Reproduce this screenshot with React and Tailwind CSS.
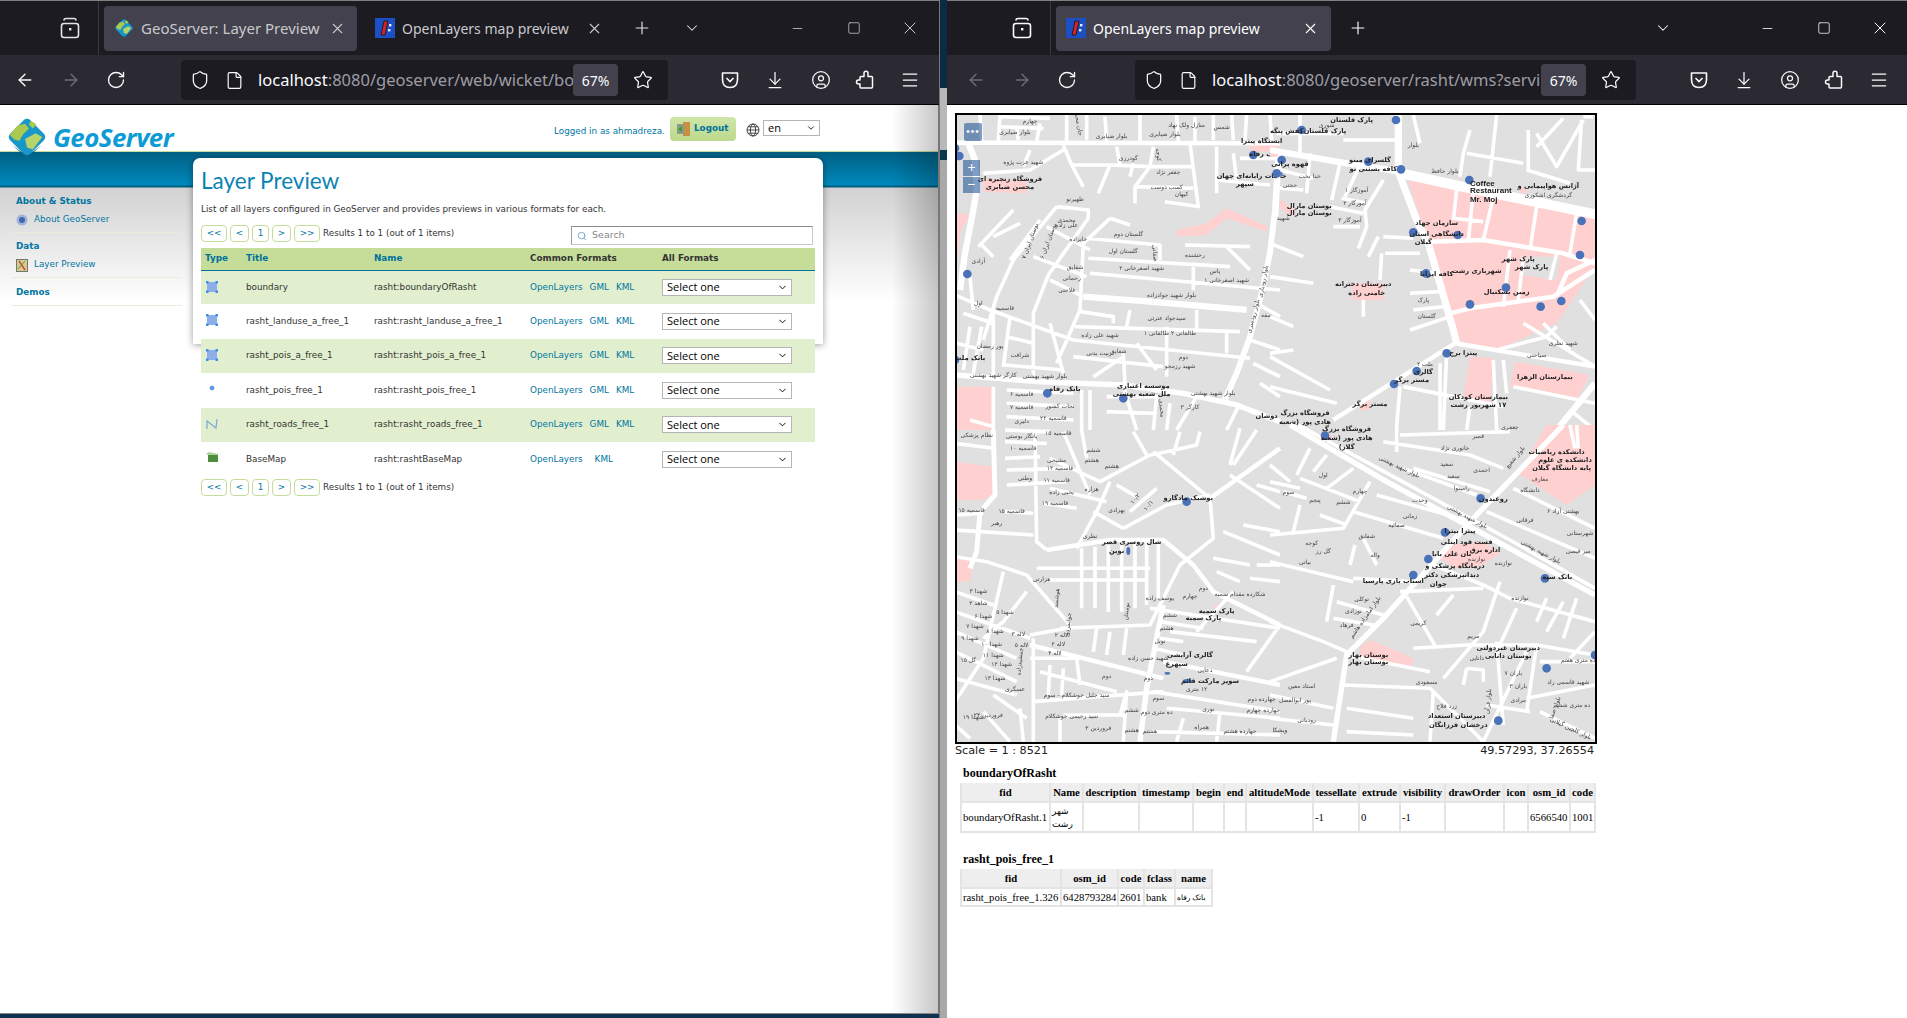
import { ArrowLeft, ArrowRight, RotateCw, Shield, File, Star, ArrowDownToLine, CircleUser, Menu, X, Plus, ChevronDown, Minus, Square, Search } from 'lucide-react';

// chrome icons ---------------------------------------------------------------
function GlobeLogo({ size = 44 }) {
  return (
    <svg width={size} height={size} viewBox="0 0 44 44">
      <rect x="7" y="7" width="30" height="30" rx="5" transform="rotate(45 22 22)" fill="#1a97c9" />
      <path d="M4 20 L12 10 L20 8 L24 13 L18 19 L14 26 L9 25 Z" fill="#a9c94f" />
      <path d="M20 24 L31 18 L38 22 L28 35 L22 33 Z" fill="#b9d36b" />
      <path d="M26 5 L32 9 L28 13 L24 9 Z" fill="#a9c94f" />
      <path d="M6 30 L22 42 L38 30 L22 44 Z" fill="#0c6b92" />
    </svg>
  );
}

function OlFavicon() {
  return (
    <svg width="20" height="20" viewBox="0 0 20 20" className="shrink-0">
      <rect width="20" height="20" fill="#1d4fc4" />
      <path d="M9 3 L13 3 L10 17 L6 17 Z" fill="#d32323" stroke="#111" strokeWidth="0.8" />
      <rect x="14" y="6" width="2.4" height="2.4" fill="#eee" />
      <rect x="13" y="11" width="2.4" height="2.4" fill="#eee" />
    </svg>
  );
}

function TabsIcon() {
  return (
    <svg width="22" height="22" viewBox="0 0 22 22" fill="none" stroke="currentColor" strokeWidth="1.6">
      <rect x="2.5" y="6.5" width="17" height="14" rx="2.5" />
      <path d="M5 3.5 Q5 1.5 7 1.5 L15 1.5 Q17 1.5 17 3.5" />
      <rect x="10" y="11" width="2.4" height="2.4" fill="currentColor" stroke="none" />
    </svg>
  );
}

function PocketIcon() {
  return (
    <svg width="20" height="20" viewBox="0 0 20 20" fill="none" stroke="currentColor" strokeWidth="1.6">
      <path d="M2.5 3 H17.5 V9.5 Q17.5 17.5 10 17.5 Q2.5 17.5 2.5 9.5 Z" strokeLinejoin="round" />
      <path d="M6.5 8 L10 11.5 L13.5 8" />
    </svg>
  );
}

function ExtensionIcon() {
  return (
    <svg width="20" height="20" viewBox="0 0 20 20" fill="none" stroke="currentColor" strokeWidth="1.5" strokeLinejoin="round" className="ml-[24px]">
      <path d="M9 3.2 A2 2 0 0 1 13 3.2 V6.5 H16.5 Q17.5 6.5 17.5 7.5 V17 Q17.5 18 16.5 18 H6 Q5 18 5 17 V14 H3.5 A2 2 0 0 1 3.5 10 H5 V7.5 Q5 6.5 6 6.5 H9 Z" />
    </svg>
  );
}

function BrowserTab({ active, bright, icon, title, width, gapEnd, small }) {
  return (
    <div className={`flex items-center h-[45px] pl-[10px] rounded-[4px] ${active ? 'bg-[#42414d]' : ''} ${bright ? 'text-white' : 'text-[#c9c9cc]'}`} style={{ width }}>
      {icon}
      <span className={`ml-[7px] whitespace-nowrap ${small ? 'text-[14px]' : 'text-[15px]'}`}>{title}</span>
      <X size={17} strokeWidth={1.5} className="ml-auto" style={{ marginRight: gapEnd }} />
    </div>
  );
}

function WindowButtons({ dim, endGap }) {
  return (
    <div className={`flex items-center ml-auto ${dim}`}>
      <Minus size={15} strokeWidth={1.3} className="mr-[42px]" />
      <Square size={14} strokeWidth={1.3} className="mr-[39px]" />
      <X size={20} strokeWidth={1.2} style={{ marginRight: endGap }} />
    </div>
  );
}

function Toolbar({ backDim, host, path, urlWidth, urlLeft, afterUrl, start }) {
  return (
    <div className="h-[50px] pt-[1px] bg-[#2b2a33] flex items-center text-[#fbfbfe] border-b border-black">
      <ArrowLeft size={20} strokeWidth={1.6} className={backDim ? 'text-[#6f6e75]' : ''} style={{ marginLeft: start }} />
      <ArrowRight size={20} strokeWidth={1.6} className="ml-[26px] text-[#6f6e75]" />
      <RotateCw size={20} strokeWidth={1.6} className="ml-[25px]" />
      <div className="h-[40px] bg-[#1c1b22] rounded-[4px] flex items-center" style={{ width: urlWidth, marginLeft: urlLeft }}>
        <Shield size={20} strokeWidth={1.5} className="ml-[9px] shrink-0" />
        <File size={19} strokeWidth={1.5} className="ml-[15px] shrink-0" />
        <div className="ml-[14px] flex-1 overflow-hidden whitespace-nowrap text-[16.5px] text-[#9d9da3]">
          <span className="text-[#fbfbfe]">{host}</span>{path}
        </div>
        <div className="w-[45px] h-[32px] rounded-[4px] bg-[#42414d] flex items-center justify-center text-[14px] shrink-0">67%</div>
        <Star size={20} strokeWidth={1.5} className="mx-[15px] shrink-0" />
      </div>
      <div className="flex items-center" style={{ marginLeft: afterUrl }}>
        <PocketIcon />
        <ArrowDownToLine size={20} strokeWidth={1.5} className="ml-[25px]" />
        <CircleUser size={20} strokeWidth={1.5} className="ml-[26px]" />
        <ExtensionIcon />
        <Menu size={20} strokeWidth={1.5} className="ml-[25px]" />
      </div>
    </div>
  );
}

// geoserver page -------------------------------------------------------------
function PagerBtn({ w, label }) {
  return (
    <span className="h-[17px] border border-[#c5dd9b] rounded-[4px] flex items-center justify-center text-[#0076a1]" style={{ width: w }}>
      {label}
    </span>
  );
}

function Pager() {
  return (
    <div className="flex items-center gap-[3px]">
      <PagerBtn w={26} label="<<" />
      <PagerBtn w={19} label="<" />
      <PagerBtn w={17} label="1" />
      <PagerBtn w={19} label=">" />
      <PagerBtn w={26} label=">>" />
      <span className="text-[#333]">Results 1 to 1 (out of 1 items)</span>
    </div>
  );
}

function TypeIcon({ kind }) {
  if (kind === 'point') {
    return (
      <svg width="12" height="12" viewBox="0 0 12 12"><circle cx="6" cy="5" r="2" fill="#5aa0ee" stroke="#2f76c9" strokeWidth="0.6" /></svg>
    );
  }
  if (kind === 'line') {
    return (
      <svg width="12" height="12" viewBox="0 0 12 12" fill="none" stroke="#7ba7dc" strokeWidth="1.2"><path d="M1 11 L1 3 L10 10 L11 1" /></svg>
    );
  }
  if (kind === 'raster') {
    return (
      <svg width="13" height="12" viewBox="0 0 13 12">
        <rect x="2" y="3" width="10" height="7" fill="#4d8f3f" />
        <path d="M0 2 L3 0 L12 2 L12 3 L2 3 Z" fill="#a8d39b" />
      </svg>
    );
  }
  return (
    <svg width="12" height="12" viewBox="0 0 12 12">
      <rect x="1" y="1" width="10" height="10" fill="#8eaeea" />
      <rect width="2.5" height="2.5" fill="#3d8ee8" />
      <rect x="9.5" width="2.5" height="2.5" fill="#3d8ee8" />
      <rect y="9.5" width="2.5" height="2.5" fill="#3d8ee8" />
      <rect x="9.5" y="9.5" width="2.5" height="2.5" fill="#3d8ee8" />
    </svg>
  );
}

const layers = [
  { kind: 'poly', title: 'boundary', name: 'rasht:boundaryOfRasht' },
  { kind: 'poly', title: 'rasht_landuse_a_free_1', name: 'rasht:rasht_landuse_a_free_1' },
  { kind: 'poly', title: 'rasht_pois_a_free_1', name: 'rasht:rasht_pois_a_free_1' },
  { kind: 'point', title: 'rasht_pois_free_1', name: 'rasht:rasht_pois_free_1' },
  { kind: 'line', title: 'rasht_roads_free_1', name: 'rasht:rasht_roads_free_1' },
  { kind: 'raster', title: 'BaseMap', name: 'rasht:rashtBaseMap', raster: true },
];

function LayerTable() {
  return (
    <table className="w-[614px] table-fixed border-collapse mt-[3px]">
      <colgroup>
        <col className="w-[45px]" />
        <col className="w-[128px]" />
        <col className="w-[156px]" />
        <col className="w-[132px]" />
        <col />
      </colgroup>
      <thead>
        <tr className="h-[22px] bg-[#c6dd9a] border-b-[1px] border-[#00729c] text-left font-bold">
          <th className="pl-[4px] text-[#00729c]">Type</th>
          <th className="text-[#00729c]">Title</th>
          <th className="text-[#00729c]">Name</th>
          <th className="text-[#333]">Common Formats</th>
          <th className="text-[#333]">All Formats</th>
        </tr>
      </thead>
      <tbody>
        {layers.map((l, i) => (
          <tr key={l.name} className={`h-[34.4px] ${i % 2 === 0 ? 'bg-[#e1efce]' : ''}`}>
            <td className="pl-[5px] align-top pt-[10px]"><TypeIcon kind={l.kind} /></td>
            <td className="text-[#333]">{l.title}</td>
            <td className="text-[#333]">{l.name}</td>
            <td className="text-[#0076a1]">
              <span>OpenLayers</span>
              {l.raster ? <span className="ml-[12px]">KML</span> : <><span className="ml-[7px]">GML</span><span className="ml-[7px]">KML</span></>}
            </td>
            <td>
              <div className="w-[130px] h-[17px] bg-white border border-[#b5b5b5] flex items-center pl-[4px] pr-[3px] text-[11px] text-black font-['Open_Sans',sans-serif]">
                Select one
                <ChevronDown size={11} strokeWidth={2} className="ml-auto" />
              </div>
            </td>
          </tr>
        ))}
      </tbody>
    </table>
  );
}

function SideLink({ icon, label }) {
  return (
    <div className="flex items-center h-[14px] mt-[7px] text-[#0076a1] pl-[4px]">
      {icon}
      <span className="ml-[6px]">{label}</span>
    </div>
  );
}

function GeoServerPage() {
  return (
    <div className="relative flex-1 bg-white border-r border-[#777] overflow-hidden font-['DejaVu_Sans',sans-serif] text-[8.8px]">
      <div className="h-[46px] flex items-start border-b border-[#c6dd9a] box-content">
        <div className="ml-[6px] mt-[11px] z-10"><GlobeLogo size={42} /></div>
        <span className="ml-[5px] mt-[14px] w-[122px] text-[25.8px] leading-[36px] font-bold italic text-[#0d9bd4] font-['Open_Sans',sans-serif] tracking-[-0.5px]">GeoServer</span>
        <span className="ml-[379px] mt-[20px] w-[112px] whitespace-nowrap text-[#0076a1]">Logged in as ahmadreza.</span>
        <div className="ml-[4px] mt-[12px] w-[66px] h-[24px] rounded-[4px] bg-gradient-to-b from-[#cfe5a8] to-[#bcd98d] flex items-center pl-[7px] font-bold text-[#00729c]">
          <svg width="13" height="14" viewBox="0 0 13 14" className="mr-[4px]">
            <rect x="6" y="0" width="7" height="14" fill="#c98f45" />
            <rect x="0" y="2" width="7" height="10" fill="#8a9a86" />
            <path d="M1 7 L5 4 L5 10 Z" fill="#3d9a35" />
          </svg>
          Logout
        </div>
        <svg width="14" height="14" viewBox="0 0 14 14" fill="none" stroke="#333" strokeWidth="0.9" className="ml-[10px] mt-[18px]">
          <circle cx="7" cy="7" r="6" />
          <ellipse cx="7" cy="7" rx="2.6" ry="6" />
          <path d="M1 7 H13 M2 3.8 H12 M2 10.2 H12" />
        </svg>
        <div className="ml-[3px] mt-[15px] w-[57px] h-[16px] border border-[#b5b5b5] flex items-center pl-[4px] pr-[3px] text-[11px] text-black font-['Open_Sans',sans-serif]">
          en
          <ChevronDown size={10} strokeWidth={2} className="ml-auto" />
        </div>
      </div>

      <div className="flex bg-[linear-gradient(to_bottom,#005f83_0px,#0089bc_33px,#005f83_34px,#005f83_35px,#d2d2d2_36px,#ffffff_150px)]">
        <div className="w-[193px] shrink-0 pt-[44px] pl-[12px] pr-[11px]">
          <div className="pl-[4px] font-bold text-[#0076a1] leading-[10px] mb-[1px]">About &amp; Status</div>
          <SideLink
            label="About GeoServer"
            icon={
              <svg width="12" height="12" viewBox="0 0 12 12"><circle cx="6" cy="6" r="5.5" fill="#9fb4d8" /><circle cx="6" cy="6" r="3" fill="#3f67b0" /></svg>
            }
          />
          <div className="border-b border-[#e6eeda] mt-[5px] mb-[8px]" />
          <div className="pl-[4px] font-bold text-[#0076a1] leading-[10px]">Data</div>
          <SideLink
            label="Layer Preview"
            icon={
              <svg width="12" height="13" viewBox="0 0 12 13"><rect x="0.5" y="0.5" width="11" height="12" fill="#d8c98e" stroke="#6d7a6d" /><path d="M3 2 L9 11" stroke="#c94a2d" strokeWidth="1.4" /><path d="M9 2 L2 10" stroke="#5e9b46" /></svg>
            }
          />
          <div className="border-b border-[#e6eeda] mt-[5px] mb-[9px]" />
          <div className="pl-[4px] font-bold text-[#0076a1] leading-[10px]">Demos</div>
          <div className="border-b border-[#e6eeda] mt-[8px]" />
        </div>

        {/* shadow stops partway down, the rows run on past it */}
        <div className="w-[630px] h-[186px] mt-[6px] bg-white rounded-t-[7px] shadow-[0_1px_7px_rgba(0,0,0,0.4)] pl-[8px]">
          <h1 className="pt-[7px] text-[22.5px] leading-[32px] text-[#0a83b4] font-['Lato',sans-serif]">Layer Preview</h1>
          <p className="mt-[6px] leading-[12px] whitespace-nowrap text-[#333]">List of all layers configured in GeoServer and provides previews in various formats for each.</p>
          <div className="flex items-start mt-[10px] w-[612px] justify-between">
            <Pager />
            <div className="w-[242px] h-[19px] mt-[1px] border border-[#c9c9c9] border-t-[#8c8c8c] border-l-[#9c9c9c] flex items-center pl-[5px] text-[#888] text-[9.5px]">
              <Search size={10} className="text-[#6a97c9] mr-[5px]" />
              Search
            </div>
          </div>
          <LayerTable />
          <div className="mt-[3px]"><Pager /></div>
        </div>
      </div>

      <div className="absolute right-0 top-0 bottom-0 w-[46px] bg-gradient-to-r from-transparent to-[rgba(0,0,0,0.22)] pointer-events-none" />
    </div>
  );
}

// map ------------------------------------------------------------------------
// each quarter is traced in its own 3x coordinates, then scaled down
const quarters = [
  {
    tx: -5, ty: -3,
    pink: [
      'M15,830 L125,830 L125,960 L15,960 Z', 'M100,205 L230,212 L230,250 L100,245 Z',
      'M15,310 L60,312 L35,360 L15,360 Z', 'M15,360 L32,360 L20,470 L15,470 Z',
      'M680,360 L770,340 L830,295 L955,350 L950,365 L830,325 L770,375 L680,380 Z', 'M900,100 L985,100 L985,125 L900,125 Z',
    ],
    roads: [
      [10, 'M15,98 L990,100 M230,812 L15,795'],
      [14, 'M55,100 L75,150 L80,240 L70,300 L45,430 L30,540'],
      [13, 'M985,130 L975,300 L960,430 L935,550 L900,680 L860,790 L820,880'],
      [12, 'M15,795 L260,815 L520,825 L700,850 L860,885 L990,935'],
      [14, 'M400,560 L600,575 L890,600'],
      [8, `M150,15 L145,95 M90,15 L95,95 M200,50 L205,90 M350,15 L350,100 M410,15 L410,90 M465,20 L470,95 M570,15 L570,95 M680,15 L685,95 M735,20 L735,95 M790,15 L790,90 M845,15 L850,90 M890,15 L885,90 M960,15 L965,90
        M150,20 L300,25 M150,50 L280,55 M340,105 L365,165 L400,230 M365,165 L480,165 L600,170 L730,170 M480,165 L445,250 M500,110 L510,165 M550,160 L540,200
        M610,110 L600,170 L555,230 L555,280 M555,230 L730,235 M645,275 L750,290 M720,100 L745,290 M800,110 L800,250 M800,210 L960,225 M850,130 L860,210 M870,145 L985,145
        M340,120 L240,180 L100,190 M320,290 L415,300 L415,325 L295,495 L250,610 M320,290 L190,450 L140,560 L100,690 M480,325 L400,400 L390,600 L320,760 M480,325 L540,345
        M410,385 L630,405 L630,450 M415,445 L840,470 M420,490 L990,540 M390,605 L490,620 L490,640 M375,650 L870,665 M370,690 L900,745 M370,740 L640,770
        M520,730 L525,820 M650,650 L650,800 M830,670 L830,730 M730,470 L730,540 M705,405 L900,410 M830,410 L900,480 M15,555 L120,600 L370,690 M90,400 L130,440 M20,700 L100,720
        M250,610 L250,800 M130,610 L130,800 M165,765 L340,780 M130,830 L130,960 M395,840 L395,960 M170,840 L370,850 M170,880 L370,890 M170,920 L370,930 M420,840 L420,960 M470,860 L620,860 L610,960
        M85,410 L190,300 M130,380 L210,340 M180,450 L270,330 M290,350 L420,420 M250,440 L410,500 M300,510 L400,560 M60,500 L70,600 M40,610 L130,640 M60,650 L40,780 M95,650 L70,790 M180,620 L160,770
        M520,830 L560,960 M740,860 L680,960 M870,880 L830,960 M900,690 L990,720 M920,580 L990,620 M910,760 L990,800 M930,820 L990,860
        M240,120 L220,170 M270,40 L260,95 M540,600 L530,650 M740,600 L740,660 M560,700 L620,780 M430,800 L520,740 M300,640 L340,790 M170,680 L250,700 M60,930 L130,950 M660,880 L650,960 M470,905 L610,910`],
    ],
    dots: [[28, 138], [52, 492], [15, 750], [292, 850], [520, 865], [910, 135], [985, 190], [15, 115]],
    labels: [
      [240, 38, 'چهارم'], [195, 72, 'بلوار ضیابری'], [485, 85, 'بلوار ضیابری'], [645, 78, 'بلوار ضیابری'], [710, 52, 'منازل ولک نهاد'], [815, 58, 'شمس'],
      [220, 162, 'شهید عزت پژوه'], [535, 150, 'گودرزی'], [655, 192, 'جعفر نژاد'], [650, 238, 'کسب دوست'], [695, 258, 'کیهان'], [375, 272, 'ظهیرنو'],
      [180, 212, 'فروشگاه زنجیره ای', 0, 1], [180, 238, 'محسن ضیابری', 0, 1], [905, 203, 'خدمات رایانه‌ای جهان', 0, 1], [885, 228, 'سپهر', 0, 1], [935, 100, 'ایستگاه پیترا', 0, 1], [945, 138, 'بانک رفاه', 0, 1],
      [350, 335, 'محمدی'], [350, 352, 'علی زاده'], [385, 392, 'خانزاده'], [535, 378, 'گلستان دوم'], [520, 428, 'گلستان اول'], [735, 440, 'رخشنده'], [575, 480, 'شهید اصغرخانی ۲'],
      [830, 515, 'شهید اصغرخانی ۱'], [795, 488, 'پاس'], [665, 560, 'بلوار شهید جوادزاده'], [375, 478, 'شقایق'], [365, 510, 'رحمانی'], [350, 547, 'فلاحتی'], [650, 630, 'سیدجواد عترتی'],
      [660, 675, 'طالقانی ۲  طالقانی ۱'], [450, 680, 'شهید علی زاده'], [450, 735, 'تربیت بدنی'], [505, 728, 'شقایق'], [690, 775, 'شهید رزمجو'], [700, 748, 'دوم'],
      [210, 740, 'شرافت'], [120, 715, 'پور رمضان'], [130, 800, 'کارگر شهید بهشتی'], [285, 803, 'بلوار شهید بهشتی'], [580, 833, 'موسسه اعتباری', 0, 1], [575, 858, 'ملل شعبه بهشتی', 0, 1],
      [345, 842, 'بانک رفاه', 0, 1], [60, 750, 'بانک ملت', 0, 1], [215, 858, 'قاسمیه ۶'], [215, 898, 'قاسمیه ۷'], [330, 895, 'نجات کشور'], [215, 940, 'دلیری'], [310, 930, 'قاسمیه ۲۲'], [950, 925, 'دوشان', 0, 1],
      [85, 458, 'آزادی'], [165, 600, 'قاسمیه'], [85, 585, 'اول'], [720, 898, 'کارگر ۳'], [790, 855, 'بلوار شهید بهشتی'], [950, 620, 'صفه'],
      [245, 395, 'بوستان ایران ۷', -70], [300, 395, 'بوستان ایران ۶', -70], [915, 620, 'بلوار رودسری', -75], [945, 515, 'بلوار رودباری', -80],
      [610, 430, 'صفاتی', 85], [380, 40, 'جان محمد', 80], [620, 135, 'کوچه', 85], [630, 895, 'محمدی', 85],
    ],
  },
  {
    tx: 315, ty: -3,
    pink: [
      'M415,210 L975,310 L975,470 L860,640 L680,720 L555,690 L470,400 Z', 'M600,740 L670,745 L660,880 L580,860 Z', 'M735,755 L960,795 L920,870 L720,830 Z',
      'M20,260 L75,300 L70,320 L35,300 Z', 'M0,115 L25,115 L25,140 L0,140 Z', 'M245,520 L340,520 L340,570 L245,570 Z', 'M750,235 L770,235 L770,248 L750,248 Z', 'M270,870 L300,870 L300,900 L270,900 Z',
    ],
    grey: ['M770,440 L870,440 L860,510 L760,495 Z'],
    roads: [
      [22, 'M395,190 L600,235 L985,315'],
      [14, 'M0,120 L230,160 L390,185'],
      [16, 'M385,15 L385,185 L440,330 L475,400 L550,660 L560,700'],
      [10, 'M480,395 L640,390 L880,430 L975,460 M540,610 L600,595 L850,560 L975,480 M860,560 L890,490 L975,450 M555,700 L190,930 M555,700 L975,770'],
      [14, 'M860,960 L975,820'],
      [8, `M560,240 L550,330 M610,240 L595,395 M670,260 L640,390 M800,290 L780,420 M920,310 L900,430 M550,325 L640,335 M720,420 L700,590 M760,440 L745,570 M860,430 L840,510
        M220,90 L385,90 M20,70 L220,70 M90,15 L90,130 M210,160 L185,270 M270,165 L225,260 M180,290 L280,310 M215,265 L290,280 M190,350 L270,350 M340,210 L285,300 L290,350 L265,415
        M340,380 L430,385 M325,380 L295,440 M345,430 L450,430 M335,430 L330,510 M420,480 L510,490 M420,550 L510,545 M430,600 L520,590 M420,660 L540,620 M280,570 L280,620
        M600,60 L580,130 L570,200 M590,130 L760,160 M680,15 L660,200 M880,25 L800,110 M775,60 L775,180 M800,70 L860,170 L940,30 M940,20 L970,20 M935,30 L925,180 L980,180 M770,180 L900,220
        M760,640 L975,770 M930,570 L975,630 M680,720 L830,680 L860,650 M0,730 L70,720 M0,620 L70,650 M0,740 L180,840 M0,830 L200,880 M390,830 L380,950 M510,760 L510,960 M530,730 L520,960
        M400,830 L700,890 M670,750 L680,960 M700,750 L710,850 M730,830 L975,880 M30,120 L20,320 M120,130 L110,250 M30,180 L130,205 M30,235 L100,240 M0,500 L130,520 M0,400 L100,440
        M430,15 L450,100 M600,890 L590,960 M820,640 L900,720 M900,900 L975,960`],
    ],
    dots: [[295, 155], [393, 178], [35, 150], [20, 190], [95, 60], [378, 30], [598, 210], [935, 333], [930, 435], [708, 533], [812, 590], [874, 573], [600, 583], [563, 375], [430, 367], [468, 490], [530, 730], [440, 783], [372, 822]],
    labels: [
      [245, 36, 'پارک قلستان', 0, 1], [165, 68, 'پارک قلستان', 0, 1], [50, 68, 'کفش پنگه', 0, 1], [300, 155, 'گلسرای مینو', 0, 1], [310, 182, 'کافه بستنی نو', 0, 1], [60, 168, 'قهوه پرانی', 0, 1],
      [525, 190, 'بلوار حافظ'], [118, 295, 'بوستان مارال', 0, 1], [118, 316, 'بوستان مارال', 0, 1], [240, 335, 'آموزگار ۳'], [255, 285, 'آموزگار ۲'], [260, 245, 'آموزگار ۱'],
      [500, 345, 'سازمان جهاد', 0, 1], [500, 378, 'دانشگاهی استان', 0, 1], [460, 403, 'گیلان', 0, 1], [280, 527, 'دبیرستان دخترانه', 0, 1], [290, 555, 'خامنی زاده', 0, 1], [500, 497, 'کافه ایرانا', 0, 1],
      [620, 490, 'شهربازی رشت', 0, 1], [710, 552, 'زمین بسکتبال', 0, 1], [745, 452, 'پارک شهر', 0, 1], [785, 476, 'پارک شهر', 0, 1], [835, 235, 'آژانس هواپیمایی و', 0, 1], [835, 262, 'گردشگری اشکوری'],
      [580, 735, 'پیتزا برج', 0, 1], [825, 808, 'بیمارستان الزهرا', 0, 1], [625, 868, 'بیمارستان کودکان', 0, 1], [625, 892, '۱۷ شهریور رشت', 0, 1], [465, 768, 'ملت ۲'], [460, 792, 'گالری', 0, 1], [425, 815, 'مستر برگر', 0, 1], [300, 888, 'مستر برگر', 0, 1],
      [105, 915, 'فروشگاه بزرگ', 0, 1], [105, 943, 'هادی پور (شعبه', 0, 1], [880, 705, 'شهید نظری'], [800, 740, 'سیاحتی'], [40, 330, 'شهید'], [170, 50, 'شوری'], [60, 232, 'حجتی'], [120, 205, 'خدا بخت'],
      [470, 625, 'گلستان'], [460, 575, 'پارک'], [430, 110, 'بلوار'],
    ],
    english: [[600, 228, 'Coffee'], [600, 250, 'Restaurant'], [600, 276, 'Mr. Moj']],
  },
  {
    tx: -5, ty: 312,
    pink: ['M15,110 L130,125 L130,205 L100,225 L15,225 Z', 'M15,395 L70,410 L60,470 L15,470 Z', 'M790,545 L825,525 L800,560 Z'],
    roads: [
      [10, 'M290,375 L480,345 L640,345 L730,420 L790,500 L990,600 M780,220 L990,70 M640,710 L990,780 M240,660 L640,760'],
      [12, 'M640,540 L590,790 L570,950'],
      [11, 'M130,15 L135,210 L90,260 L80,380 L60,430'],
      [8, `M15,55 L130,70 M165,15 L300,20 M165,50 L290,55 M165,100 L270,95 M170,135 L360,130 M170,180 L350,170 M300,190 L470,230 M280,235 L380,250 M165,260 L250,265 M15,270 L100,265 M15,315 L250,330
        M255,15 L260,350 L290,375 M340,20 L420,210 M395,15 L410,100 M480,170 L440,260 L380,370 M600,90 L450,170 L300,100 M610,80 L780,220 L790,340 L690,420 L640,520 M600,90 L650,80 L740,60 L750,20 M850,120 L920,15
        M520,310 L650,240 L780,210 M430,260 L520,310 M500,180 L560,215 M540,260 L620,190 M395,370 L395,550 M435,365 L435,550 M475,360 L475,560 M515,355 L515,560 M555,355 L555,550 M590,350 L590,540 M625,350 L625,520
        M260,430 L600,430 M290,465 L590,465 M15,395 L110,410 L230,450 L360,600 M15,500 L130,540 M330,610 L600,600 L640,520 M160,440 L100,700 L15,830 M15,560 L240,640 M15,620 L200,700 M15,680 L200,770 M15,760 L200,810
        M230,500 L160,590 L100,640 M240,630 L350,610 M250,640 L250,950 M240,700 L390,700 M270,740 L500,800 M380,700 L390,780 M250,830 L640,800 M340,870 L520,870 M510,870 L530,800 L520,950 M610,800 L990,860
        M740,620 L850,500 M890,740 L990,600 M660,620 L920,650 M600,550 L990,610 M820,320 L990,390 M790,400 L900,420 M800,440 L870,470 M920,420 L990,420 M900,460 L990,470 M840,150 L990,250 M920,180 L990,200 M880,300 L990,320
        M630,590 L760,610 M630,640 L700,650 M610,670 L700,690 M650,850 L990,880 M600,920 L990,930 M700,880 L680,950 M810,860 L800,950 M15,900 L60,940 M130,810 L230,880 M210,850 L220,950 M100,860 L180,950
        M440,610 L430,680 M480,620 L470,690 M530,610 L520,690 M300,720 L295,810 M340,730 L335,810 M330,880 L330,950 M870,10 L840,120 M690,20 L670,90 M550,20 L590,90`],
    ],
    dots: [[710, 230]],
    ovals: [[535, 378, 6, 12], [652, 745, 9, 4], [712, 768, 14, 6]],
    labels: [
      [715, 225, 'بوشیک مادگارو', 0, 1], [545, 358, 'شال روسری قصر', 0, 1], [500, 385, 'نوین', 0, 1], [800, 565, 'پارک سمیه', 0, 1], [760, 585, 'پارک سمیه', 0, 1], [720, 695, 'گالری آرایشی', 0, 1], [680, 722, 'سپهرغ', 0, 1], [780, 775, 'سوپر مارکت قائم', 0, 1],
      [215, 38, 'پانگار بوستی'], [325, 30, 'قاسمیه ۱۵'], [220, 75, 'قاسمیه ۱۰'], [320, 110, 'مشیحی'], [330, 135, 'قاسمیه ۱۲'], [320, 170, 'قاسمیه ۱۱'], [225, 165, 'وطنی'], [335, 208, 'یحیی زاده'], [315, 240, 'قاسمیه ۱۹'], [65, 260, 'قاسمیه ۱۵'], [185, 265, 'قاسمیه ۱۵'], [140, 300, 'رهبر'],
      [80, 35, 'نظام پزشکی'], [430, 80, 'ششم'], [425, 110, 'هشتم'], [485, 130, 'هشتم'], [425, 198, 'هزاره'], [500, 260, 'بهزادی'], [420, 340, 'نظری'], [275, 468, 'هزارتی'], [630, 525, 'یوسف زاده'],
      [760, 495, 'دوم'], [720, 518, 'چهارم'], [870, 512, 'شکارده مقدام سمیه'], [660, 575, 'ششم'], [650, 615, 'هشتم'], [630, 655, 'نوبل'], [595, 705, 'شهید حسن زاده'], [765, 740, 'دعایی'], [740, 798, '۱۲ متری'],
      [470, 758, 'دوم'], [595, 765, 'دوم'], [380, 815, 'سید جلیل خوشکلام - سوم'], [365, 878, 'سید رحیمی خوشکلام'], [625, 825, 'سوم'], [620, 868, 'ده متری دوم'], [545, 862, 'ششم'], [775, 858, 'نوری'], [755, 912, 'همراه'], [870, 925, 'چهارده هشتم'], [940, 860, 'چهارده چهارم'], [935, 828, 'چهارده دوم'],
      [85, 505, 'شهدا ۳'], [85, 540, 'شاهد ۲'], [165, 568, 'شهدا ۵'], [100, 580, 'شهدا ۶'], [75, 610, 'شهدا ۷'], [135, 625, 'شهدا ۸'], [60, 645, 'شهدا ۹'], [125, 662, 'شهدا ۱۰'], [130, 695, 'شهدا ۱۱'], [155, 722, 'شهدا ۱۲'], [55, 710, 'گل ۱۵'], [135, 765, 'شهدا ۱۳'], [195, 798, 'عسگری'],
      [205, 632, 'لاله ۳'], [215, 665, 'لاله ۵'], [335, 635, 'لاله ۲'], [325, 663, 'لاله ۲'], [315, 690, 'لاله ۴'], [445, 915, 'فروردین ۳'], [545, 920, 'هشتم'], [600, 925, 'هشتم'], [115, 875, 'فروردین ۲۳'], [70, 882, 'شهدا ۱۹'],
      [560, 225, '۱۰/۲', -50], [600, 245, '۱۰/۱', -50], [535, 560, 'بوستان', -85], [325, 520, 'هوشمند', -85], [360, 600, 'جوانمردی', -85], [215, 710, 'جمشیدزاده', -85],
    ],
  },
  {
    tx: 315, ty: 312,
    pink: [
      'M830,0 L975,0 L975,180 L890,240 L745,145 Z', 'M530,360 L640,350 L690,385 L640,420 L560,430 L500,395 Z', 'M270,665 L300,645 L350,665 L430,700 L425,725 L270,700 Z', 'M140,25 L190,30 L180,48 L150,45 Z',
    ],
    roads: [
      [12, 'M60,0 L350,170 L700,360 L975,510'],
      [8, 'M85,0 L370,155 L720,345 L975,490'],
      [12, 'M880,0 L610,280 L340,580 L230,690 L190,950'],
      [8, 'M900,0 L915,70 M920,0 L925,70'],
      [8, `M380,0 L380,80 M340,50 L600,90 L700,130 M390,30 L720,20 M250,130 L170,190 M90,160 L270,230 M320,210 L640,300 M250,260 L520,340 M0,330 L220,310 L300,170 M430,130 L660,200 M400,130 L620,210 M730,190 L975,310 M650,260 L975,400
        M390,500 L640,490 M490,420 L640,480 L720,520 L975,590 M690,470 L640,620 L520,760 M410,515 L500,670 M500,570 L550,510 M430,670 L590,660 L800,660 L975,690 M590,730 L580,780 M590,730 L640,735 L640,770 M680,650 L700,900 M740,550 L680,680 M800,660 L770,860
        M650,840 L780,860 M220,780 L480,790 L640,950 M230,850 L430,880 M230,920 L430,930 M490,800 L480,950 M640,950 L770,680 M810,860 L975,940 M230,690 L480,740 M0,770 L200,700 M0,810 L190,850 M0,880 L190,900 M0,590 L160,650 L230,680 M190,480 L170,590 M200,530 L340,570 M190,580 L310,600 M250,460 L420,470 M0,410 L250,470
        M120,70 L80,150 M170,90 L130,140 M0,120 L60,170 M0,170 L90,190 M40,200 L110,220 M90,240 L70,320 M150,270 L230,300 M255,360 L240,420 M280,340 L320,420 M830,520 L800,590 M880,530 L830,620 M920,520 L880,640 M975,620 L900,700 M810,710 L975,710 M770,820 L975,780`],
    ],
    dots: [[165, 32], [632, 220], [525, 322], [475, 402], [825, 460], [685, 887], [830, 730], [430, 450], [975, 690]],
    labels: [
      [230, 18, 'فروشگاه بزرگ', 0, 1], [230, 44, 'هادی پور (شعبه', 0, 1], [230, 72, 'گلاز)', 0, 1], [860, 88, 'دانشکده ریاضیات', 0, 1], [885, 110, 'دانشکده ی علوم', 0, 1], [875, 135, 'پایه دانشگاه گیلان', 0, 1],
      [670, 228, 'روغندون', 0, 1], [570, 325, 'پیتزا بیتزا', 0, 1], [590, 358, 'فست فود ایتلی', 0, 1], [645, 382, 'اداره برق', 0, 1], [545, 392, 'نان علی بابا', 0, 1], [555, 430, 'درمانگاه پزشکی و', 0, 1], [545, 455, 'دندانپزشکی دکتر', 0, 1], [505, 482, 'جوان', 0, 1],
      [370, 475, 'اسباب بازی پارسیا', 0, 1], [862, 462, 'بانک سپه', 0, 1], [295, 695, 'بوستان بهار', 0, 1], [295, 718, 'بوستان بهار', 0, 1], [715, 675, 'دبیرستان غیردولتی', 0, 1], [715, 700, 'بوستان دانایی', 0, 1], [560, 878, 'دبیرستان استعداد', 0, 1], [565, 905, 'درخشان فرزانگان', 0, 1],
      [555, 75, 'خانوری نژاد'], [530, 122, 'سعید'], [635, 140, 'احمدی'], [575, 195, 'رامینوا'], [450, 232, 'وحدت'], [380, 305, 'صفائیه'], [420, 280, 'زمانی'], [290, 338, 'شقایق'], [315, 395, 'واله'], [270, 205, 'چهارم'], [220, 238, 'ششم'], [135, 230, 'پنجم'], [55, 208, 'سوم'],
      [160, 385, 'گل رز'], [105, 418, 'بیاتی'], [275, 528, 'توکلی'], [250, 563, 'نوزادی'], [230, 605, 'فرهاد'], [445, 600, 'کریمی'], [610, 640, 'مریم'], [620, 705, 'دانایی'], [470, 778, 'مسعودی'], [95, 790, 'استاد معین'], [75, 830, 'پور ابوالفضل'], [110, 892, 'رودبانی'], [30, 920, 'ویشکا'],
      [700, 420, 'نوازنده'], [750, 525, 'نوازنده'], [620, 408, 'نوازنده'], [895, 778, 'شهید قاسمی راد'], [905, 845, 'ده متری ششم'], [925, 712, 'ده متری هفتم'], [745, 830, 'مرادی'], [745, 790, 'باران ۳'], [730, 750, 'باران ۷'], [530, 850, 'زرد فلاح'],
      [925, 385, 'میر قیصی'], [930, 330, 'شهرستانی'], [880, 265, 'بهشتی آزاد ۶'], [765, 290, 'فرقانی'], [780, 200, 'دانشگاه'], [810, 168, 'معارف'], [720, 12, 'جعفری'], [625, 38, 'قمبر'], [550, 160, 'سعید'], [125, 360, 'کوچه'], [160, 155, 'اول'],
      [385, 130, 'بلوار شهید بهشتی', 25], [590, 280, 'بلوار شهید بهشتی', 28], [810, 385, 'بلوار شهید بهشتی', 28], [290, 580, 'بلوار امامزاده هاشم', -55], [860, 850, 'بلوار صفا', -70], [740, 100, 'بلوار شفیع', -50], [660, 830, 'بلوار قرآن', -85], [900, 915, 'بلوار کلچین گیلانی', 25],
    ],
  },
];

function MapQuarter({ q }) {
  return (
    <g transform={`translate(${q.tx},${q.ty}) scale(0.3333)`}>
      {q.pink.map((d) => <path key={d} d={d} fill="#ffd0d0" />)}
      {(q.grey || []).map((d) => <path key={d} d={d} fill="#e0e0e0" />)}
      {q.roads.map(([w, d], i) => (
        <path key={i} d={d} fill="none" stroke="#fff" strokeWidth={w * 1.35} strokeLinejoin="round" />
      ))}
      {q.dots.map(([x, y]) => <circle key={`${x}-${y}`} cx={x} cy={y} r="13" fill="#4a72b8" />)}
      {(q.ovals || []).map(([x, y, rx, ry]) => <ellipse key={`${x}-${y}`} cx={x} cy={y} rx={rx} ry={ry} fill="#4a72b8" />)}
      {q.labels.map(([x, y, text, rot = 0, bold = 0]) => (
        <text
          key={`${x}-${y}-${text}`}
          x={x}
          y={y}
          direction="rtl"
          textAnchor="middle"
          transform={rot ? `rotate(${rot} ${x} ${y})` : undefined}
          fontFamily="'DejaVu Sans', sans-serif"
          fontSize={bold ? 20 : 18}
          fontWeight={bold ? 700 : 400}
          fill={bold ? '#222' : '#444'}
        >
          {text}
        </text>
      ))}
      {(q.english || []).map(([x, y, text]) => (
        <text key={text} x={x} y={y} fontFamily="'Liberation Sans', sans-serif" fontSize="24" fontWeight="700" fill="#222">{text}</text>
      ))}
    </g>
  );
}

function MapControl({ children, className }) {
  return (
    <div className={`absolute w-[17px] h-[16px] bg-[rgba(0,60,136,0.5)] text-white font-bold flex items-center justify-center text-[14px] leading-none ${className}`}>
      {children}
    </div>
  );
}

function MapView() {
  return (
    <div className="relative w-[642px] h-[631px] border-2 border-black bg-[#e0e0e0] overflow-hidden">
      <svg width="638" height="627" viewBox="2 2 638 627" className="block blur-[0.4px]">
        {quarters.map((q) => <MapQuarter key={`${q.tx}-${q.ty}`} q={q} />)}
      </svg>
      <MapControl className="left-[7px] top-[8px] !w-[18px] !h-[18px] rounded-[2px]">
        <span className="tracking-[1px] text-[10px]">•••</span>
      </MapControl>
      <MapControl className="left-[6px] top-[45px]">+</MapControl>
      <MapControl className="left-[6px] top-[62px]">−</MapControl>
    </div>
  );
}

// wms feature tables ---------------------------------------------------------
function FeatureTable({ title, cols, row, rowHeight, className }) {
  return (
    <div className={`ml-[5px] ${className}`}>
      <h3 className="ml-[3px] text-[12px] leading-[14px] font-bold text-black">{title}</h3>
      <table className="table-fixed border-collapse mt-[3px] text-[10.7px] text-black" style={{ width: cols.reduce((a, c) => a + c.w, 0) }}>
        <thead>
          <tr className="h-[19px] bg-[#eee]">
            {cols.map((c) => (
              <th key={c.label} className="border-2 border-[#e4e4e4] border-t-0 px-0 font-bold text-center" style={{ width: c.w }}>{c.label}</th>
            ))}
          </tr>
        </thead>
        <tbody>
          <tr style={{ height: rowHeight }}>
            {row.map((v, i) => (
              <td key={i} className="border-2 border-[#e4e4e4] pl-[1px] pr-0 leading-[12px] text-left">{v}</td>
            ))}
          </tr>
        </tbody>
      </table>
    </div>
  );
}

const boundaryCols = [
  ['fid', 89], ['Name', 33], ['description', 56], ['timestamp', 54], ['begin', 31], ['end', 22], ['altitudeMode', 67],
  ['tessellate', 46], ['extrude', 41], ['visibility', 45], ['drawOrder', 59], ['icon', 24], ['osm_id', 42], ['code', 25],
].map(([label, w]) => ({ label, w }));

const poisCols = [
  ['fid', 100], ['osm_id', 57], ['code', 26], ['fclass', 31], ['name', 37],
].map(([label, w]) => ({ label, w }));

function WmsPage() {
  return (
    <div className="flex-1 bg-white pl-[8px] pt-[8px] font-['Liberation_Serif','DejaVu_Sans',serif] overflow-hidden">
      <MapView />
      <div className="flex justify-between w-[639px] h-[14px] items-center font-['DejaVu_Sans',sans-serif] text-[11.2px] text-[#222]">
        <span>Scale = 1 : 8521</span>
        <span>49.57293, 37.26554</span>
      </div>
      <FeatureTable
        className="mt-[8px]"
        title="boundaryOfRasht"
        cols={boundaryCols}
        rowHeight={30}
        row={['boundaryOfRasht.1', <span key="n" className="text-[9px]">شهر رشت</span>, '', '', '', '', '', '-1', '0', '-1', '', '', '6566540', '1001']}
      />
      <FeatureTable
        className="mt-[19px]"
        title="rasht_pois_free_1"
        cols={poisCols}
        rowHeight={18}
        row={['rasht_pois_free_1.326', '6428793284', '2601', 'bank', <span key="n" className="text-[7.5px] whitespace-nowrap">بانک رفاه</span>]}
      />
    </div>
  );
}

export default function App() {
  return (
    <div className="w-[1907px] h-[1018px] flex overflow-hidden font-['Noto_Sans',sans-serif] bg-[#0b2a44]">
      <div className="w-[939px] h-full flex flex-col shrink-0">
        <div className="h-[55px] bg-[#1c1b22] border-t border-[#808080] flex items-center text-[#e4e4e6]">
          <span className="ml-[59px]"><TabsIcon /></span>
          <div className="w-px h-[54px] bg-[#3a3a42] ml-[17px] mr-[5px]" />
          <BrowserTab active icon={<GlobeLogo size={20} />} title="GeoServer: Layer Preview" width={253} gapEnd={11} />
          <div className="w-[8px]" />
          <BrowserTab small icon={<OlFavicon />} title="OpenLayers map preview" width={257} gapEnd={19} />
          <Plus size={20} strokeWidth={1.4} className="ml-[10px]" />
          <ChevronDown size={18} strokeWidth={1.4} className="ml-[31px]" />
          <WindowButtons dim="text-[#c9c9cc]" endGap={19} />
        </div>
        <Toolbar host="localhost" path=":8080/geoserver/web/wicket/bo" urlWidth={487} urlLeft={55} afterUrl={52} start={15} />
        <GeoServerPage />
        <div className="h-[5px] bg-[#0d3350] border-t border-[#888]" />
      </div>

      {/* sliver of desktop between the two windows */}
      <div className="w-[8px] h-full flex flex-col shrink-0 border-l border-[#777]">
        <div className="h-[88px] bg-[#0b2a44]" />
        <div className="h-[62px] bg-[#b8b8b8]" />
        <div className="h-[10px] bg-[#0b3a50]" />
        <div className="flex-1 bg-[#a9a9a9]" />
      </div>

      <div className="flex-1 h-full flex flex-col min-w-0">
        <div className="h-[55px] bg-[#1c1b22] border-t border-[#808080] flex items-center text-[#fbfbfe]">
          <span className="ml-[64px]"><TabsIcon /></span>
          <div className="w-px h-[54px] bg-[#3a3a42] ml-[17px] mr-[5px]" />
          <BrowserTab active bright small icon={<OlFavicon />} title="OpenLayers map preview" width={275} gapEnd={12} />
          <Plus size={20} strokeWidth={1.4} className="ml-[17px]" />
          <ChevronDown size={18} strokeWidth={1.4} className="ml-[286px]" />
          <WindowButtons dim="" endGap={17} />
        </div>
        <Toolbar backDim host="localhost" path=":8080/geoserver/rasht/wms?servi" urlWidth={501} urlLeft={58} afterUrl={53} start={19} />
        <WmsPage />
      </div>
    </div>
  );
}
